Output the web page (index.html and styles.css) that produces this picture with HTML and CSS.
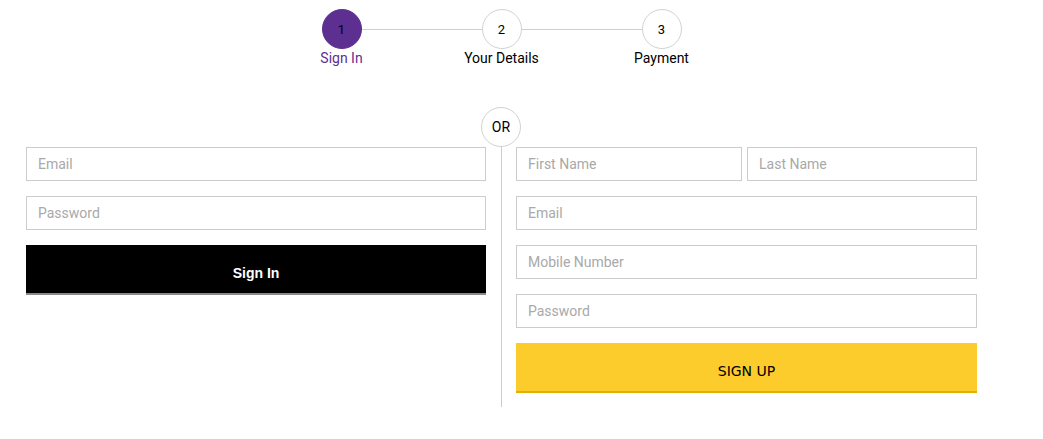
FILE: index.html
```html
<!DOCTYPE html>
<html lang="en">
<head>
<meta charset="utf-8">
<title>Sign In</title>
<link rel="stylesheet" href="styles.css">
</head>
<body>
<div class="page">
  <div class="stepper">
    <div class="track">
      <span class="dot active">1</span>
      <span class="connector"></span>
      <span class="dot">2</span>
      <span class="connector"></span>
      <span class="dot">3</span>
    </div>
    <div class="labels">
      <span class="label active">Sign In</span>
      <span class="label">Your Details</span>
      <span class="label">Payment</span>
    </div>
  </div>

  <div class="forms">
    <form class="col">
      <input class="field" type="email" placeholder="Email">
      <input class="field" type="password" placeholder="Password">
      <button class="btn btn-dark" type="button">Sign In</button>
    </form>
    <div class="divider">
      <span class="or">OR</span>
      <span class="rule"></span>
    </div>
    <form class="col col-right">
      <div class="pair">
        <input class="field" type="text" placeholder="First Name">
        <input class="field" type="text" placeholder="Last Name">
      </div>
      <input class="field" type="email" placeholder="Email">
      <input class="field" type="tel" placeholder="Mobile Number">
      <input class="field" type="password" placeholder="Password">
      <button class="btn btn-yellow" type="button">SIGN UP</button>
    </form>
  </div>
</div>
</body>
</html>
```

FILE: styles.css
```css
* { box-sizing: border-box; }
html, body { margin: 0; padding: 0; background: #fff; }
body { font-family: Roboto, "Noto Sans", sans-serif; color: #000; }

.page {
  width: 951px;
  margin-left: 26px;
  padding-top: 9px;
}

.stepper {
  display: flex;
  flex-direction: column;
  align-items: center;
}
.track {
  display: flex;
  align-items: center;
  width: 360px;
}
.dot {
  width: 40px;
  height: 40px;
  border-radius: 50%;
  border: 1px solid #d2d2d2;
  background: #fff;
  display: flex;
  align-items: center;
  justify-content: center;
  font-size: 13px;
  flex: none;
}
.dot.active {
  background: #5d2f91;
  border-color: #5d2f91;
  color: #000;
}
.connector {
  flex: 1;
  height: 1px;
  background: #cfcfcf;
}
.labels {
  display: grid;
  grid-template-columns: repeat(3, 160px);
}
.label {
  text-align: center;
  font-size: 14px;
  line-height: 18px;
}
.label.active { color: #5d2f91; }

.forms {
  margin-top: 40px;
  display: grid;
  grid-template-columns: 460px 30px 461px;
}
.col {
  margin: 0;
  padding-top: 40px;
  display: flex;
  flex-direction: column;
  gap: 15px;
}
.col-right { padding-bottom: 14px; }
.pair {
  display: grid;
  grid-template-columns: 226px 230px;
  column-gap: 5px;
}
.field {
  display: block;
  width: 100%;
  height: 34px;
  border: 1px solid #cccccc;
  padding: 0 11px;
  font-family: Roboto, "Noto Sans", sans-serif;
  font-size: 14px;
  color: #333;
  background: #fff;
  outline: none;
}
.field::placeholder { color: #a9a9a9; }

.btn {
  display: block;
  width: 100%;
  height: 50px;
  border: 0;
  padding: 8px 0 0;
  font-size: 14px;
  cursor: pointer;
}
.btn-dark {
  background: #000;
  color: #fff;
  border-bottom: 2px solid #8a8a8a;
  font-family: "Liberation Sans", Arial, sans-serif;
  font-weight: 700;
}
.btn-yellow {
  background: #fccb2c;
  color: #000;
  border-bottom: 2px solid #e2b000;
  font-family: "DejaVu Sans", Verdana, sans-serif;
}

.divider {
  display: flex;
  flex-direction: column;
  align-items: flex-start;
}
.or {
  width: 40px;
  height: 40px;
  margin-left: -5px;
  border-radius: 50%;
  border: 1px solid #d2d2d2;
  display: flex;
  align-items: center;
  justify-content: center;
  font-size: 14px;
  flex: none;
}
.rule {
  flex: 1;
  width: 1px;
  margin-left: 15px;
  background: #cccccc;
}
```
